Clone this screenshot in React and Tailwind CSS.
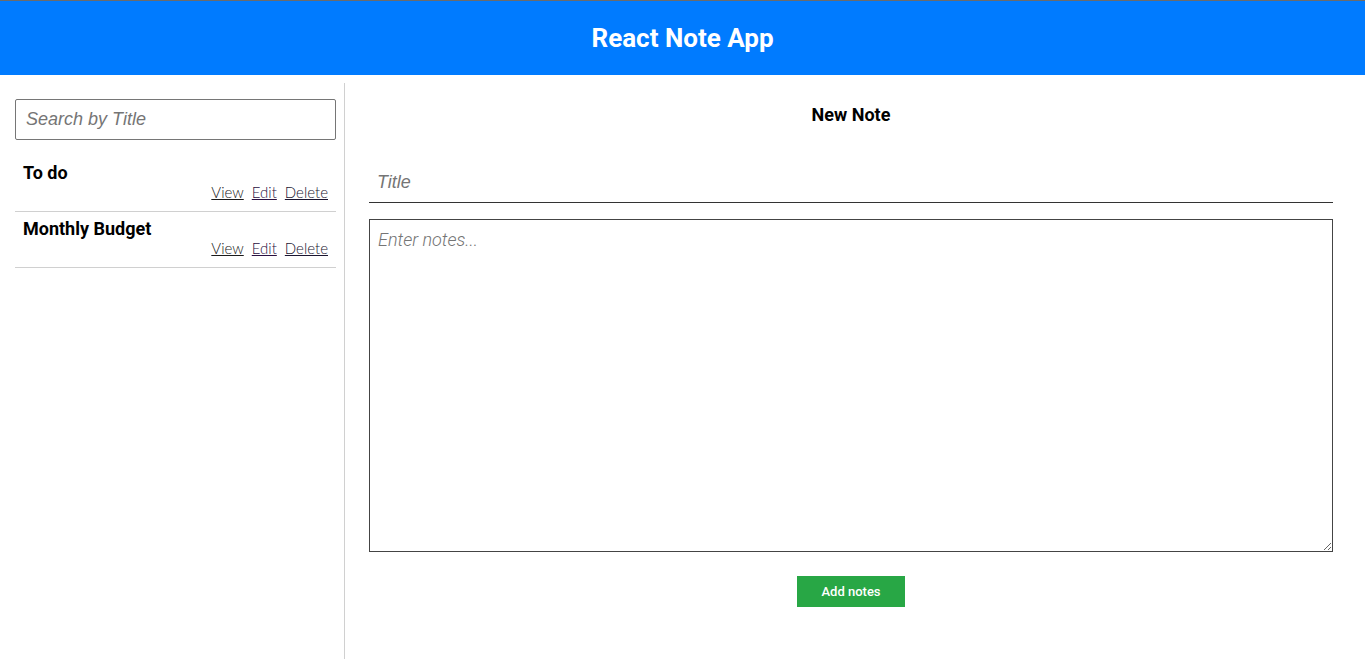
import React from "react";

const notes = [{ title: "To do" }, { title: "Monthly Budget" }];

export default function App() {
  return (
    <div className="min-h-[667px] bg-white border-t border-[#6b6b6b] font-['Roboto',sans-serif]">
      <header className="h-[74px] bg-[#007bff] flex items-center justify-center">
        <h1 className="text-white text-[26px] font-bold leading-none font-['Roboto',sans-serif]">React Note App</h1>
      </header>
      <div className="flex mt-2">
        <aside className="w-[345px] h-[576px] border-r border-[#d0d0d0] pl-[15px] pr-[8px] pt-4 shrink-0">
          <input
            type="text"
            placeholder="Search by Title"
            className="w-full h-[41px] border border-[#767676] rounded-[2px] px-[10px] text-[18px] italic font-['Liberation_Sans',Arial,sans-serif] placeholder:text-[#757575] outline-none"
          />
          <ul className="mt-4">
            {notes.map((n) => (
              <li key={n.title} className="border-b border-[#d0d0d0] px-2 pt-[6px] pb-[10px]">
                <div className="text-[18px] font-bold leading-[21px] text-black">{n.title}</div>
                <div className="flex justify-end gap-2 text-[15px] leading-[18px] font-light font-['Lato',sans-serif]">
                  <a href="#" className="underline text-[#1a1a1a]">View</a>
                  <a href="#" className="underline text-[#2a0f40]">Edit</a>
                  <a href="#" className="underline text-[#1a1530]">Delete</a>
                </div>
              </li>
            ))}
          </ul>
        </aside>
        <main className="flex-1 pl-6 pr-8 pt-[22px]">
          <h2 className="text-center text-[18px] font-bold leading-[20px] text-black">New Note</h2>
          <input
            type="text"
            placeholder="Title"
            className="mt-[37px] w-full h-[41px] border-b border-[#333] px-[8px] text-[18px] italic font-['Liberation_Sans',Arial,sans-serif] placeholder:text-[#757575] outline-none"
          />
          <textarea
            placeholder="Enter notes..."
            className="mt-4 block w-full h-[333px] border border-[#444] px-[8px] py-[6px] text-[18px] italic font-light font-['Roboto',sans-serif] placeholder:text-[#757575] outline-none"
          />
          <div className="flex justify-center mt-6">
            <button className="w-[108px] h-[31px] bg-[#28a745] text-white text-[13px] font-medium font-['Roboto',sans-serif]">
              Add notes
            </button>
          </div>
        </main>
      </div>
    </div>
  );
}
